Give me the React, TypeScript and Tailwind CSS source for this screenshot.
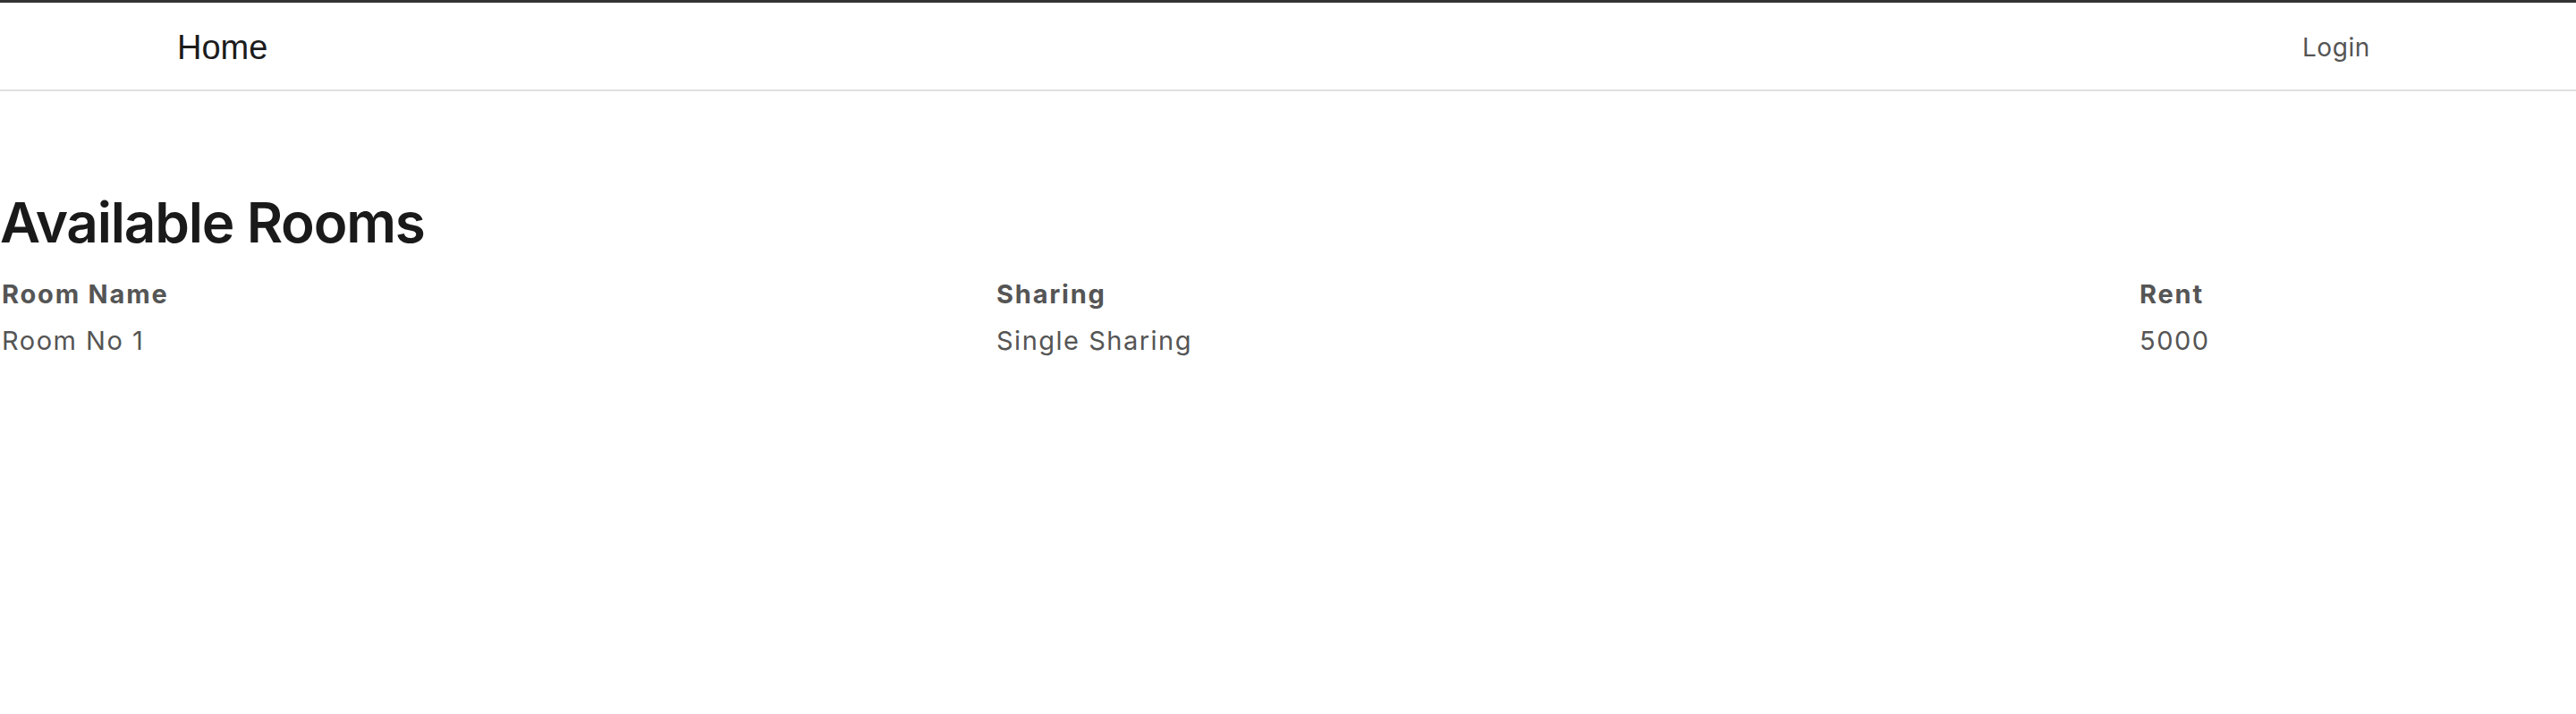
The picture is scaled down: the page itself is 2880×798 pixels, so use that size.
export default function App() {
  const inter = { fontFamily: 'Inter, "Noto Sans", sans-serif' };
  return (
    <div className="w-[2880px] min-h-[798px] bg-white" style={inter}>
      <div className="h-[3px] bg-[#333333]" />
      <header className="flex h-[99px] items-center justify-between border-b-2 border-[#e0e0e0] pl-[198px] pr-[230px]">
        <a
          className="pt-[2px] text-[38px] leading-none text-[#1c1c1c]"
          style={{ fontFamily: '"Liberation Sans", Arial, sans-serif' }}
        >
          Home
        </a>
        <a className="pt-[2px] text-[28px] leading-none tracking-[0.6px] text-[#555555]">Login</a>
      </header>
      <main className="pt-[116px]">
        <h1 className="text-[62px] font-semibold leading-[62px] tracking-[-1.2px] text-[#1a1a1a]">
          Available Rooms
        </h1>
        <div className="mt-[23px] grid grid-cols-[1112px_1278px_1fr] text-[29px] leading-[52px] tracking-[1.5px] text-[#555555]">
          <div className="pl-[2px] font-bold tracking-[1.8px]">Room Name</div>
          <div className="pl-[2px] font-bold tracking-[1.8px]">Sharing</div>
          <div className="pl-[2px] font-bold tracking-[1.8px]">Rent</div>
          <div className="pl-[2px]">Room No 1</div>
          <div className="pl-[2px]">Single Sharing</div>
          <div className="pl-[2px]">5000</div>
        </div>
      </main>
    </div>
  );
}
